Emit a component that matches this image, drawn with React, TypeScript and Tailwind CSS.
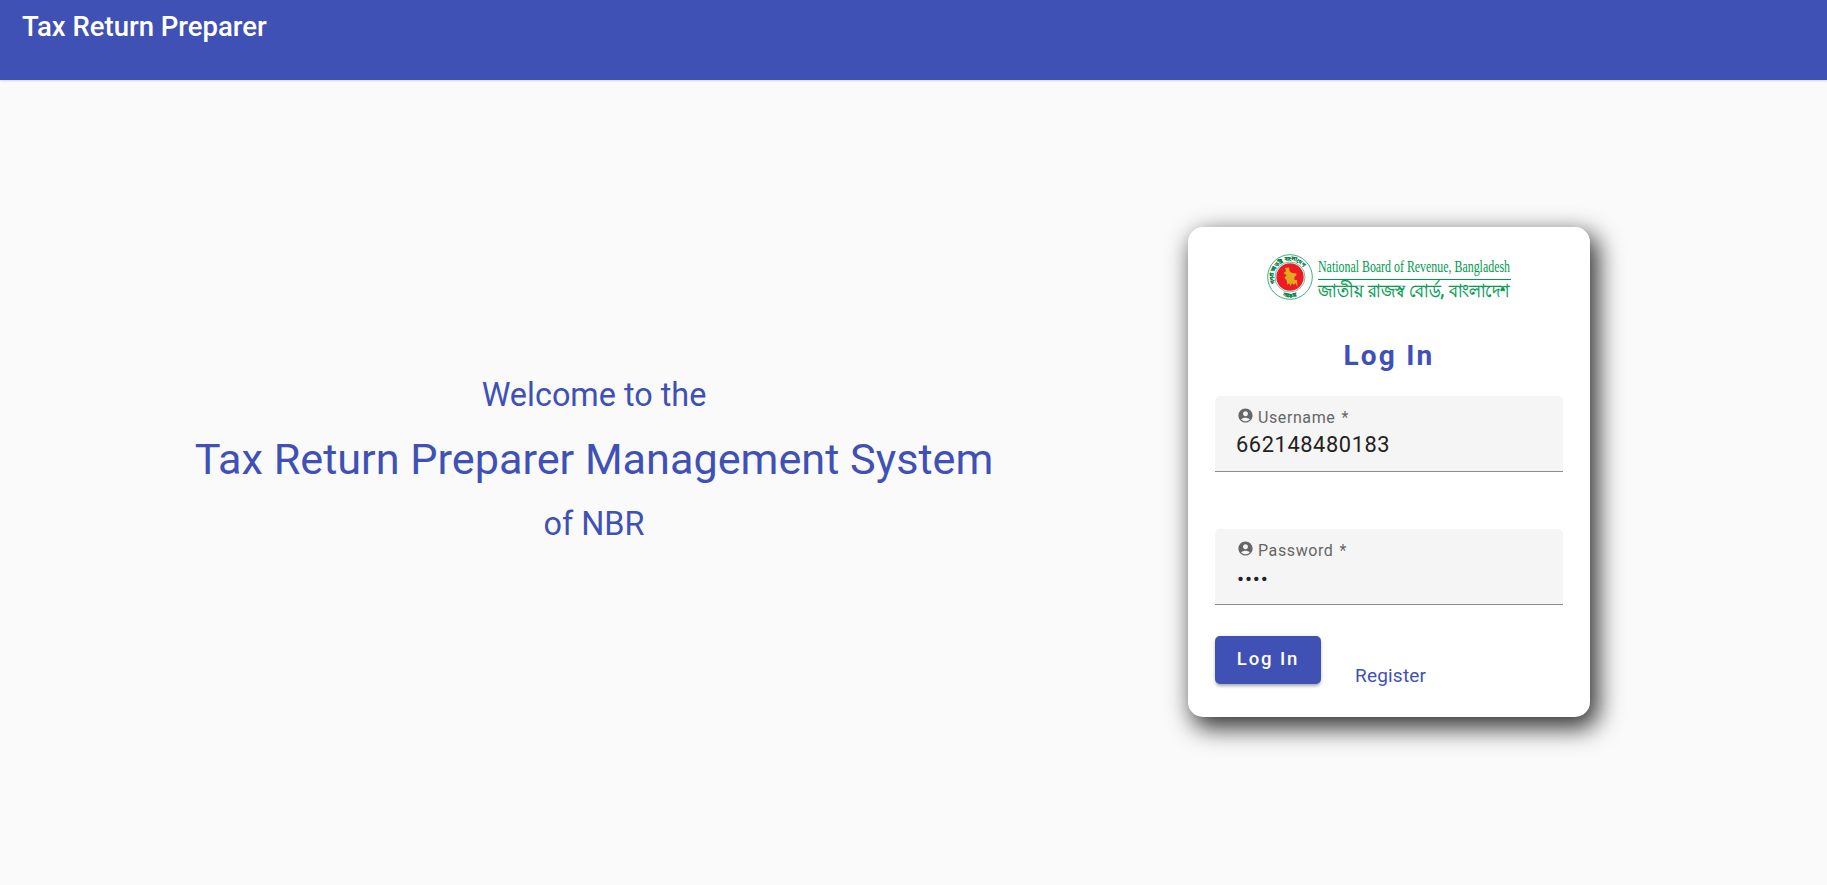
import React from "react";

function AccountIcon() {
  return (
    <svg viewBox="0 0 24 24" className="w-[17px] h-[17px] fill-[#666666] shrink-0">
      <path d="M12 2C6.48 2 2 6.48 2 12s4.48 10 10 10 10-4.48 10-10S17.52 2 12 2zm0 4c1.93 0 3.5 1.57 3.5 3.5S13.93 13 12 13s-3.5-1.57-3.5-3.5S10.07 6 12 6zm0 14c-2.03 0-4.43-.82-6.14-2.88C7.55 15.8 9.68 15 12 15s4.45.8 6.14 2.12C16.43 19.18 14.03 20 12 20z" />
    </svg>
  );
}

function Logo() {
  return (
    <div className="flex justify-center items-start h-[46px]">
      <svg viewBox="0 0 46 46" className="w-[46px] h-[46px] shrink-0">
        <defs>
          <path id="ringTop" d="M8.2 30A16.400 16.400 0 1 1 37.800 30" />
          <path id="ringBottom" d="M11 39.500A20.500 20.500 0 0 0 35 39.500" />
        </defs>
        <circle cx="23" cy="23" r="22.3" fill="#fff" stroke="#0b9a5a" strokeWidth="0.8" />
        <circle cx="23" cy="23" r="15" fill="#fff" stroke="#0b9a5a" strokeWidth="0.6" />
        <text fontSize="5.300" fontWeight="700" letterSpacing="0.3" fill="#0b7f47" stroke="#0b7f47" strokeWidth="0.2" fontFamily="'Noto Sans',sans-serif">
          <textPath href="#ringTop" startOffset="1">গণপ্রজাতন্ত্রী বাংলাদেশ</textPath>
        </text>
        <text fontSize="5.300" fontWeight="700" fill="#0b7f47" stroke="#0b7f47" strokeWidth="0.2" fontFamily="'Noto Sans',sans-serif">
          <textPath href="#ringBottom" startOffset="6">সরকার</textPath>
        </text>
        <circle cx="23" cy="23" r="13.700" fill="#ed1c24" />
        <path d="M18 14L22 13.500L22.500 17L25 19L29.500 19.500L29 22L27.500 22.500L27.500 26L30 26L30.500 33L28.500 29L27 31L25 29L23.500 32L22 29L20.500 31L19.500 26L17.500 24L19.500 21L16.500 19L19 17Z" fill="#e0a91f" />
      </svg>
      <div className="flex flex-col w-[193px] ml-[5px] text-[#009a4e] leading-none">
        <div className="font-['Liberation_Serif',serif] text-[17px] h-[25px] pt-px leading-[24px] whitespace-nowrap scale-x-[0.7] origin-left">National Board of Revenue, Bangladesh</div>
        <div className="h-px bg-[#009a4e] shrink-0"></div>
        <div className="font-['Noto_Sans',sans-serif] font-medium text-[18px] h-[20px] leading-[20px] whitespace-nowrap scale-x-[0.89] origin-left [-webkit-text-stroke:0.35px_#009a4e]">জাতীয় রাজস্ব বোর্ড, বাংলাদেশ</div>
      </div>
    </div>
  );
}

function Field({ label, value, small }: { label: string; value: string; small?: boolean }) {
  return (
    <div className="h-[76px] bg-[#f5f5f5] rounded-t-[5px] border-b border-[#8c8c8c] px-[22px] pt-[12px]">
      <div className="flex items-center h-[20px] text-[16px] text-[#666666] tracking-[0.6px]">
        <span className="-translate-y-[3px] mr-[4px]"><AccountIcon /></span>
        <span>{label}</span>
        <span className="ml-[6px]">*</span>
      </div>
      <div className={small ? "h-[30px] mt-[2px] flex items-center pt-[2px] text-[#212121] text-[21px] tracking-[0.8px] leading-none" : "h-[30px] mt-[2px] flex items-center text-[#212121] text-[21.800px] tracking-[0.6px] -ml-px"}>{value}</div>
    </div>
  );
}

export default function App() {
  return (
    <div className="h-[885px] overflow-hidden bg-[#fafafa] font-['Roboto',sans-serif] flex flex-col">
      <header className="h-[80px] bg-[#3f51b5] text-white px-[22px] pt-[9px] text-[27.500px] font-medium leading-[36px] shrink-0 shadow-[0_1px_2px_rgba(0,0,0,0.15)]">
        Tax Return Preparer
      </header>
      <main className="flex flex-1 items-start">
        <section className="w-[1188px] flex flex-col items-center text-[#3f51b5] pt-[292px] shrink-0">
          <div className="text-[32.400px] leading-[46px]">Welcome to the</div>
          <div className="text-[43.200px] leading-[50px] mt-[17px]">Tax Return Preparer Management System</div>
          <div className="text-[32.400px] leading-[46px] mt-[16px]">of NBR</div>
        </section>
        <section className="w-[402px] h-[490px] mt-[147px] bg-white rounded-[15px] px-[27px] pt-[27px] shadow-[6px_9px_24px_2px_rgba(0,0,0,0.8)] shrink-0">
          <Logo />
          <h1 className="text-[#3f51b5] text-center font-bold text-[28px] tracking-[2.2px] leading-[40px] mt-[36px]">Log In</h1>
          <div className="mt-[20px] flex flex-col gap-[57px]">
            <Field label="Username" value="662148480183" />
            <Field label="Password" value="••••" small />
          </div>
          <div className="flex items-start mt-[31px]">
            <button className="w-[106px] h-[48px] bg-[#3f51b5] text-white rounded-[5px] font-medium text-[18.500px] tracking-[1.9px] shadow-[0_3px_3px_-1px_rgba(0,0,0,0.25),0_1px_5px_rgba(0,0,0,0.15)]">Log In</button>
            <a className="ml-[34px] mt-[28px] text-[#3f51b5] text-[19px] leading-[24px] tracking-[0.2px]">Register</a>
          </div>
        </section>
      </main>
    </div>
  );
}
